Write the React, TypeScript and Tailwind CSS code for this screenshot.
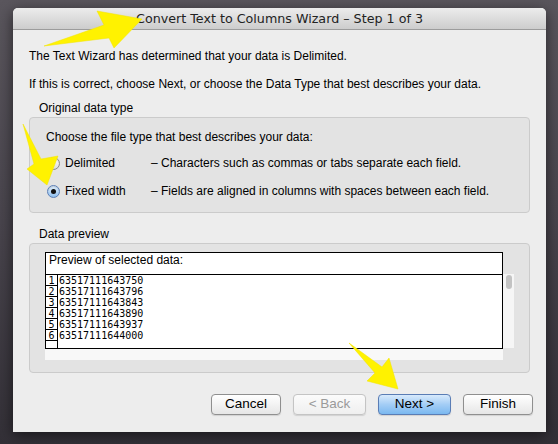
import React from 'react';

const ui = { fontFamily: '"Lucida Grande", "Liberation Sans", Arial, sans-serif' };
const title = { fontFamily: '"Lucida Grande", "DejaVu Sans", sans-serif' };
const mono = { fontFamily: '"DejaVu Sans Mono", "Liberation Mono", monospace' };

const rows = [
  '63517111643750',
  '63517111643796',
  '63517111643843',
  '63517111643890',
  '63517111643937',
  '63517111644000',
];

const Radio: React.FC<{ checked?: boolean }> = ({ checked }) => (
  <span
    className={`flex h-[13px] w-[13px] items-center justify-center rounded-full border shadow-[inset_0_1px_1px_rgba(0,0,0,0.15)] ${
      checked
        ? 'border-[#5b7fb6] bg-gradient-to-b from-[#e3f0fc] to-[#8fc0ef]'
        : 'border-[#8a8a8a] bg-gradient-to-b from-white to-[#dcdcdc]'
    }`}
  >
    {checked && <span className="h-[5px] w-[5px] rounded-full bg-[#111]" />}
  </span>
);

const Button: React.FC<{ label: string; w: string; variant?: 'default' | 'primary' | 'disabled' }> = ({
  label,
  w,
  variant = 'default',
}) => {
  const cls =
    variant === 'primary'
      ? 'border-[#5a7db5] bg-gradient-to-b from-[#d8eafc] via-[#a3cdf5] to-[#7ab8f0] text-black'
      : variant === 'disabled'
        ? 'border-[#c4c4c4] bg-gradient-to-b from-[#fbfbfb] to-[#efefef] text-[#9a9a9a]'
        : 'border-[#8f8f8f] bg-gradient-to-b from-white to-[#e6e6e6] text-black';
  return (
    <div className={`${w} flex h-[21px] items-center justify-center rounded-[4px] border text-[13.5px] shadow-[0_1px_1px_rgba(0,0,0,0.12)] ${cls}`}>
      {label}
    </div>
  );
};

export default function App() {
  return (
    <div className="relative h-[444px] w-[558px] overflow-hidden bg-gradient-to-b from-[#5a565d] via-[#48444c] to-[#333037]" style={ui}>
      <div className="ml-[13px] pt-[8px]">
        <div className="flex h-[424px] w-[533px] flex-col overflow-hidden rounded-t-[5px] bg-[#ededed] shadow-[0_3px_14px_rgba(0,0,0,0.55)]">
          {/* title bar */}
          <div
            className="flex h-[22px] shrink-0 items-center justify-center border-b border-[#9c9c9c] bg-gradient-to-b from-[#ececec] to-[#cdcdcd] pt-[1px] text-[12.7px] text-[#222]"
            style={title}
          >
            Convert Text to Columns Wizard – Step 1 of 3
          </div>

          <div className="flex flex-col px-[16px] text-[12px] leading-[15px] text-black">
            <div className="mt-[19px]">The Text Wizard has determined that your data is Delimited.</div>
            <div className="mt-[13px]">If this is correct, choose Next, or choose the Data Type that best describes your data.</div>

            <div className="mt-[9px] pl-[10px]">Original data type</div>
            <div className="mt-[1px] flex h-[96px] flex-col rounded-[4px] border border-[#cbcbcb] bg-[#e3e3e3] px-[16px]">
              <div className="mt-[12px]">Choose the file type that best describes your data:</div>
              <div className="mt-[11px] flex items-center">
                <div className="ml-[1px]"><Radio /></div>
                <span className="ml-[5px] w-[86px]">Delimited</span>
                <span>– Characters such as commas or tabs separate each field.</span>
              </div>
              <div className="mt-[13px] flex items-center">
                <div className="ml-[1px]"><Radio checked /></div>
                <span className="ml-[5px] w-[86px]">Fixed width</span>
                <span>– Fields are aligned in columns with spaces between each field.</span>
              </div>
            </div>

            <div className="mt-[14px] pl-[10px]">Data preview</div>
            <div className="mt-[1px] flex h-[130px] flex-col rounded-[4px] border border-[#cbcbcb] bg-[#e3e3e3] px-[15px] pt-[8px]">
              <div className="flex">
                <div className="flex w-[458px] flex-col">
                  <div className="h-[23px] border border-black bg-white pl-[3px] text-[12px] leading-[14px]">
                    Preview of selected data:
                  </div>
                  <div className="flex h-[74px] border-x border-b border-black bg-white text-[10px] leading-[11px]" style={mono}>
                    <div className="flex w-[12px] flex-col border-r border-black">
                      {rows.map((_, i) => (
                        <div key={i} className="h-[11px] border-b border-black text-center">
                          {i + 1}
                        </div>
                      ))}
                    </div>
                    <div className="flex flex-col pl-[1px]">
                      {rows.map((r) => (
                        <div key={r} className="h-[11px]">
                          {r}
                        </div>
                      ))}
                    </div>
                  </div>
                  <div className="h-[11px] bg-[#f8f8f8]" />
                </div>
                <div className="mt-[22px] h-[74px] w-[11px] bg-[#f6f6f6] pt-[1px]">
                  <div className="ml-[3px] h-[14px] w-[6px] rounded-full bg-[#c3c3c3]" />
                </div>
              </div>
            </div>
          </div>

          <div className="mt-[21px] flex gap-[12px] pl-[198px]">
            <Button label="Cancel" w="w-[70px]" />
            <Button label="< Back" w="w-[73px]" variant="disabled" />
            <Button label="Next >" w="w-[73px]" variant="primary" />
            <Button label="Finish" w="w-[70px]" />
          </div>
        </div>
      </div>

      {/* yellow annotation arrows */}
      <svg className="pointer-events-none absolute left-0 top-0" width="558" height="444">
        <g fill="#fff200" stroke="#f2e400" strokeWidth="0.5" strokeLinejoin="round">
          <polygon points="44,46 104,25 97,11 142,19 114,48 109,38" />
          <polygon points="23,124 41,159 58,156 47,185 27,169 34,164" />
          <polygon points="349,343 382,367 389,358 398,389 367,381 375,373" />
        </g>
      </svg>
    </div>
  );
}
